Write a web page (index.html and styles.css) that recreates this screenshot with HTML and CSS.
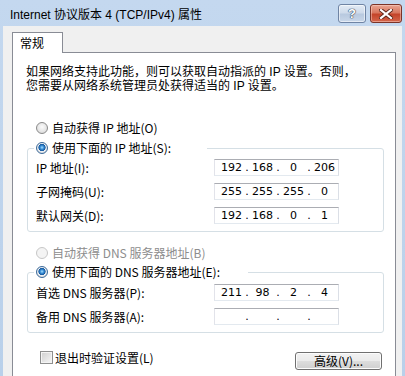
FILE: index.html
```html
<!DOCTYPE html>
<html lang="zh-CN">
<head>
    <meta charset="UTF-8">
    <title>Internet 协议版本 4 (TCP/IPv4) 属性</title>
    <link rel="stylesheet" href="styles.css">
</head>
<body>
    <div class="window">
        <div class="titlebar">
            <span class="title">Internet 协议版本 4 (TCP/IPv4) 属性</span>
            <div class="caption-buttons">
                <span class="cap-btn cap-help">?</span>
                <span class="cap-btn cap-close">
                    <svg width="14" height="10" viewBox="0 0 14 10">
                        <path d="M2 1 L12 9 M12 1 L2 9" stroke="#5a2418" stroke-width="4" stroke-linecap="square"/>
                        <path d="M2 1 L12 9 M12 1 L2 9" stroke="#ffffff" stroke-width="2.2" stroke-linecap="square"/>
                    </svg>
                </span>
            </div>
        </div>

        <div class="client">
            <div class="tabs">
                <span class="tab">常规</span>
            </div>

            <div class="panel">
                <p class="intro">如果网络支持此功能，则可以获取自动指派的 IP 设置。否则，<br>您需要从网络系统管理员处获得适当的 IP 设置。</p>

                <label class="option option-first"><span class="radio"></span>自动获得 IP 地址(O)</label>

                <fieldset class="group group-ip">
                    <legend class="group-title group-title-ip"><span class="radio radio-on"></span>使用下面的 IP 地址(S):</legend>
                    <div class="field">
                        <span class="field-label">IP 地址(I):</span>
                        <div class="ip">
                            <span class="octet">192</span><span class="dot">.</span><span class="octet">168</span><span class="dot">.</span><span class="octet">0</span><span class="dot">.</span><span class="octet">206</span>
                        </div>
                    </div>
                    <div class="field">
                        <span class="field-label">子网掩码(U):</span>
                        <div class="ip">
                            <span class="octet">255</span><span class="dot">.</span><span class="octet">255</span><span class="dot">.</span><span class="octet">255</span><span class="dot">.</span><span class="octet">0</span>
                        </div>
                    </div>
                    <div class="field">
                        <span class="field-label">默认网关(D):</span>
                        <div class="ip">
                            <span class="octet">192</span><span class="dot">.</span><span class="octet">168</span><span class="dot">.</span><span class="octet">0</span><span class="dot">.</span><span class="octet">1</span>
                        </div>
                    </div>
                </fieldset>

                <label class="option option-disabled"><span class="radio radio-disabled"></span>自动获得 DNS 服务器地址(B)</label>

                <fieldset class="group group-dns">
                    <legend class="group-title group-title-dns"><span class="radio radio-on"></span>使用下面的 DNS 服务器地址(E):</legend>
                    <div class="field">
                        <span class="field-label">首选 DNS 服务器(P):</span>
                        <div class="ip">
                            <span class="octet">211</span><span class="dot">.</span><span class="octet">98</span><span class="dot">.</span><span class="octet">2</span><span class="dot">.</span><span class="octet">4</span>
                        </div>
                    </div>
                    <div class="field">
                        <span class="field-label">备用 DNS 服务器(A):</span>
                        <div class="ip">
                            <span class="octet"></span><span class="dot">.</span><span class="octet"></span><span class="dot">.</span><span class="octet"></span><span class="dot">.</span><span class="octet"></span>
                        </div>
                    </div>
                </fieldset>

                <div class="footer-row">
                    <label class="check-option"><span class="checkbox"></span>退出时验证设置(L)</label>
                    <span class="button">高级(V)...</span>
                </div>
            </div>
        </div>
    </div>
</body>
</html>
```

FILE: styles.css
```css
* {
    box-sizing: border-box;
}

body {
    margin: 0;
    width: 405px;
    height: 376px;
    overflow: hidden;
    font-family: "Noto Sans CJK SC", sans-serif;
    font-size: 12px;
    color: #000;
}

.window {
    height: 376px;
    background: linear-gradient(#c4d8ef, #b9d0ea);
    display: flex;
    flex-direction: column;
}

/* title bar */

.titlebar {
    height: 26px;
    flex-shrink: 0;
    display: flex;
    justify-content: space-between;
    padding-left: 10px;
    padding-right: 3px;
}

.title {
    font-family: "Liberation Sans", "Noto Sans CJK SC", sans-serif;
    font-size: 12px;
    line-height: 16px;
    padding-top: 7px;
    color: #000;
}

.caption-buttons {
    display: flex;
    gap: 4px;
    padding-top: 4px;
}

.cap-btn {
    height: 19px;
    border-radius: 3px;
    display: flex;
    align-items: center;
    justify-content: center;
}

.cap-help {
    width: 28px;
    border: 1px solid #6f84a4;
    background: linear-gradient(#e3ebf5 0%, #cfdbeb 45%, #b8c9df 55%, #c9d7e9 100%);
    box-shadow: inset 0 0 0 1px rgba(255, 255, 255, 0.55);
    color: #fff;
    font-family: "Liberation Sans", sans-serif;
    font-weight: 700;
    font-size: 13px;
    text-shadow: 0 0 1px #2d3e57, 0 0 1px #2d3e57, 0 0 1px #2d3e57;
}

.cap-close {
    width: 32px;
    border: 1px solid #7b3327;
    background: linear-gradient(#e9a593 0%, #d8775f 45%, #c4442a 55%, #d4664c 100%);
    box-shadow: inset 0 0 0 1px rgba(255, 220, 210, 0.45);
}

/* client area */

.client {
    flex: 1;
    margin: 0 3px;
    background: #f0f0f0;
    padding: 6px 6px 0 9px;
    display: flex;
    flex-direction: column;
}

.tabs {
    display: flex;
}

.tab {
    position: relative;
    z-index: 1;
    width: 51px;
    height: 21px;
    margin-bottom: -1px;
    padding-left: 7px;
    line-height: 20px;
    background: #fff;
    border: 1px solid #898c95;
    border-bottom: 0;
}

.panel {
    flex: 1;
    background: #fff;
    border: 1px solid #898c95;
    border-bottom: 0;
    padding: 12px 11px 0 14px;
}

.intro {
    margin: 0 0 0 -1px;
    font-family: "Liberation Sans", "Noto Sans CJK SC", sans-serif;
    line-height: 14px;
}

/* radio options */

.option {
    display: flex;
    align-items: center;
    gap: 4px;
    height: 16px;
    margin-left: 9px;
    line-height: 16px;
}

.option-first {
    margin-top: 27px;
}

.option-disabled {
    margin-top: 13px;
    color: #8d8d8d;
}

.radio {
    width: 12px;
    height: 12px;
    flex-shrink: 0;
    border-radius: 50%;
    border: 1px solid #8a8a8a;
    background: radial-gradient(circle at 50% 40%, #fbfbfb 0, #e4e4e4 60%, #d0d0d0 100%);
}

.radio-on {
    border-color: #3c6a9a;
    background: radial-gradient(circle at 50% 45%, #a8e0ff 0, #3a8fd6 1.8px, #13569e 3.3px, #eef2f6 3.9px, #dcdcdc 5.5px);
}

.radio-disabled {
    border-color: #c7c7c7;
    background: #f4f4f4;
}

/* group boxes */

.group {
    margin: 4px 0 0;
    min-width: 0;
    border: 1px solid #d5dfe5;
    border-radius: 3px;
    padding: 3px 44px 7px 6px;
}

.group-dns {
    margin-top: 3px;
    padding-top: 4px;
}

.group-title {
    display: flex;
    align-items: center;
    gap: 4px;
    height: 16px;
    padding: 0 0 0 2px;
    line-height: 16px;
}

.group-title-ip {
    width: 173px;
}

.group-title-dns {
    width: 214px;
}

.field {
    display: flex;
    align-items: center;
    justify-content: space-between;
    height: 17px;
    margin-top: 7px;
}

.field:first-of-type {
    margin-top: 0;
}

.field-label {
    padding-left: 2px;
}

.ip {
    width: 125px;
    height: 17px;
    display: flex;
    padding-left: 4px;
    border: 1px solid;
    border-color: #abadb3 #dbdfe6 #e3e9ef #e2e3ea;
    font-family: "DejaVu Sans", sans-serif;
    font-size: 11px;
    line-height: 15px;
}

.octet {
    width: 25px;
    text-align: center;
}

.dot {
    width: 6px;
    text-align: center;
}

/* footer */

.footer-row {
    display: flex;
    justify-content: space-between;
    align-items: flex-start;
    margin: 18px 2px 0 13px;
}

.check-option {
    display: flex;
    align-items: center;
    gap: 2px;
    height: 13px;
    line-height: 13px;
}

.checkbox {
    width: 13px;
    height: 13px;
    border: 1px solid #8e8f8f;
    background: linear-gradient(135deg, #cfcfcf, #f7f7f7);
    box-shadow: inset 0 0 0 1px #f4f4f4;
}

.button {
    width: 87px;
    height: 18px;
    margin-top: 1px;
    border: 1px solid #707070;
    border-radius: 3px;
    background: linear-gradient(#f2f2f2 0%, #ebebeb 48%, #dddddd 52%, #cfcfcf 100%);
    box-shadow: inset 0 0 0 1px #fcfcfc;
    text-align: center;
    line-height: 16px;
}
```
